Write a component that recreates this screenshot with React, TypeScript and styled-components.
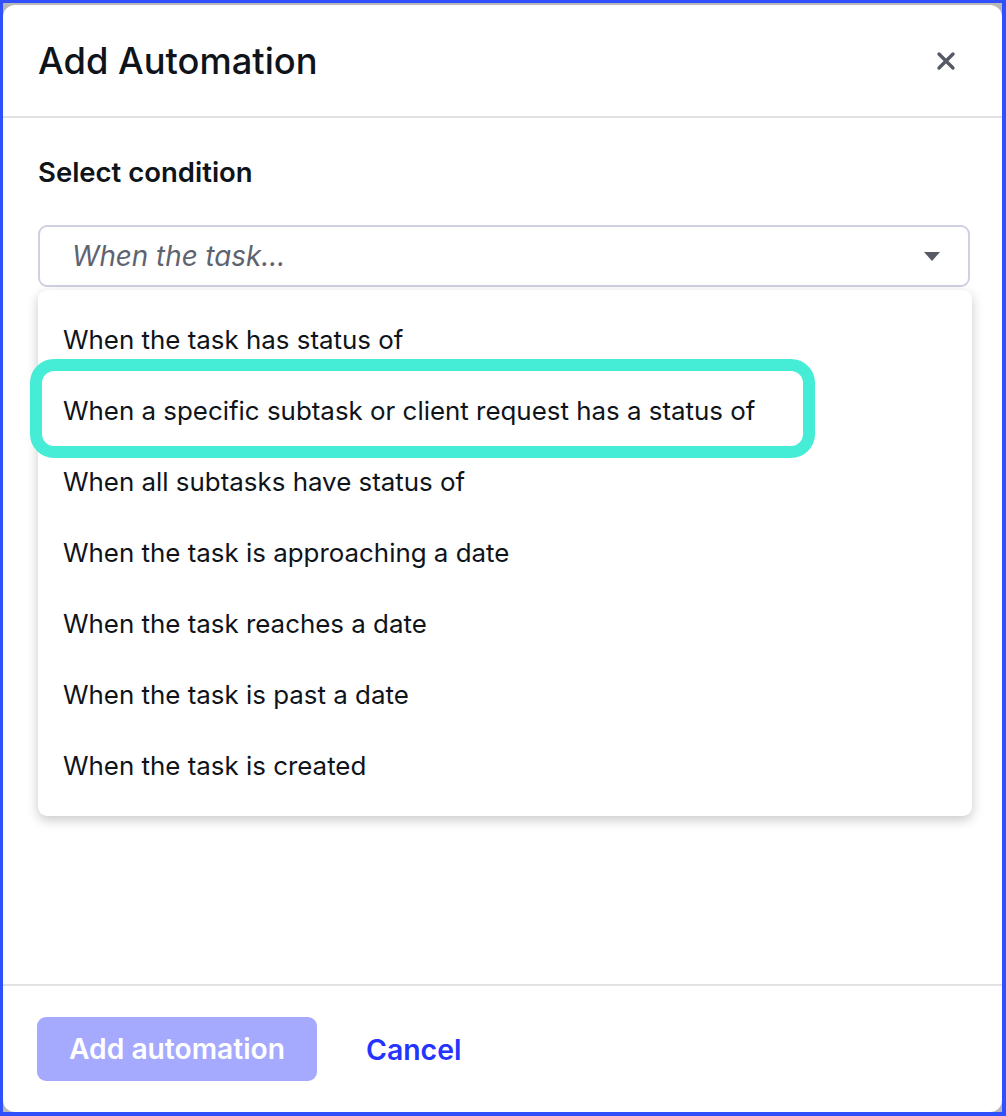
import styled, { createGlobalStyle } from 'styled-components';

const GlobalStyle = createGlobalStyle`
    html, body {
        margin: 0;
        padding: 0;
        background: #3050ff;
    }
    body {
        font-family: Inter, "Noto Sans", "Liberation Sans", sans-serif;
        color: #0f141a;
    }
`;

const Frame = styled.div`
    width: 1006px;
    height: 1116px;
    box-sizing: border-box;
    padding: 3px 4px 4px 3px;
    background: #3050ff;
`;

const Backdrop = styled.div`
    height: 100%;
    background: #b8b8b8;
    padding-top: 2px;
    box-sizing: border-box;
`;

const Modal = styled.div`
    height: 100%;
    background: #ffffff;
    border-radius: 12px;
    display: flex;
    flex-direction: column;
`;

const Header = styled.div`
    height: 111px;
    display: flex;
    align-items: center;
    justify-content: space-between;
    padding: 0 44px 0 35px;
    border-bottom: 2px solid #e2e2e4;
`;

const Title = styled.h1`
    margin: 0;
    font-size: 36.3px;
    font-weight: 500;
    color: #0f141a;
`;

const CloseButton = styled.button`
    border: 0;
    background: none;
    padding: 0;
    width: 24px;
    height: 24px;
    display: flex;
    align-items: center;
    justify-content: center;
    cursor: pointer;
`;

const Body = styled.div`
    flex: 1;
    padding: 37px 32px 0 35px;
`;

const Label = styled.div`
    font-size: 27.5px;
    font-weight: 600;
    color: #0f141a;
    margin-bottom: 36px;
`;

const SelectWrap = styled.div`
    position: relative;
`;

const SelectBox = styled.div`
    height: 62px;
    box-sizing: border-box;
    border: 2px solid #cfd1e3;
    border-radius: 9px;
    display: flex;
    align-items: center;
    justify-content: space-between;
    padding: 0 28px 0 32px;
`;

const Placeholder = styled.span`
    font-size: 27.8px;
    font-style: italic;
    color: #5e6370;
`;

const Menu = styled.ul`
    position: absolute;
    top: 65px;
    left: 0;
    right: -2px;
    margin: 0;
    padding: 14px 0 15px;
    list-style: none;
    background: #ffffff;
    border-radius: 9px;
    box-shadow: 0 4px 12px rgba(0, 0, 0, 0.22);
    z-index: 2;
`;

const Item = styled.li<{ $ring?: boolean }>`
    position: relative;
    height: 71px;
    display: flex;
    align-items: center;
    padding-left: 25px;
    font-size: 25.9px;
    color: #0f141a;

    ${({ $ring }) =>
        $ring &&
        `
        &::after {
            content: '';
            position: absolute;
            left: -8px;
            top: -16px;
            width: 785px;
            height: 99px;
            box-sizing: border-box;
            border: 12px solid #45ecd6;
            border-radius: 24px;
        }
    `}
`;

const Footer = styled.div`
    height: 128px;
    border-top: 2px solid #e2e2e4;
    display: flex;
    align-items: center;
    gap: 49px;
    padding: 0 34px;
    box-sizing: border-box;
`;

const PrimaryButton = styled.button`
    height: 64px;
    width: 280px;
    border: 0;
    border-radius: 9px;
    background: #a5aaff;
    color: #ffffff;
    font-family: inherit;
    font-size: 28.2px;
    font-weight: 600;
`;

const LinkButton = styled.button`
    border: 0;
    background: none;
    padding: 0;
    color: #2433ff;
    font-family: inherit;
    font-size: 28.4px;
    font-weight: 600;
`;

const options = [
    'When the task has status of',
    'When a specific subtask or client request has a status of',
    'When all subtasks have status of',
    'When the task is approaching a date',
    'When the task reaches a date',
    'When the task is past a date',
    'When the task is created',
];

export default function App() {
    return (
        <Frame>
            <GlobalStyle />
            <Backdrop>
                <Modal>
                    <Header>
                        <Title>Add Automation</Title>
                        <CloseButton aria-label="Close">
                            <svg width="20" height="20" viewBox="0 0 20 20">
                                <path d="M3 3 L17 17 M17 3 L3 17" stroke="#555a66" strokeWidth="3.4" strokeLinecap="round" />
                            </svg>
                        </CloseButton>
                    </Header>
                    <Body>
                        <Label>Select condition</Label>
                        <SelectWrap>
                            <SelectBox>
                                <Placeholder>When the task...</Placeholder>
                                <svg width="16" height="9" viewBox="0 0 16 9">
                                    <path d="M0 0 H16 L8 9 Z" fill="#555a66" />
                                </svg>
                            </SelectBox>
                            <Menu>
                                {options.map((o, i) => (
                                    <Item key={o} $ring={i === 1}>{o}</Item>
                                ))}
                            </Menu>
                        </SelectWrap>
                    </Body>
                    <Footer>
                        <PrimaryButton disabled>Add automation</PrimaryButton>
                        <LinkButton>Cancel</LinkButton>
                    </Footer>
                </Modal>
            </Backdrop>
        </Frame>
    );
}
